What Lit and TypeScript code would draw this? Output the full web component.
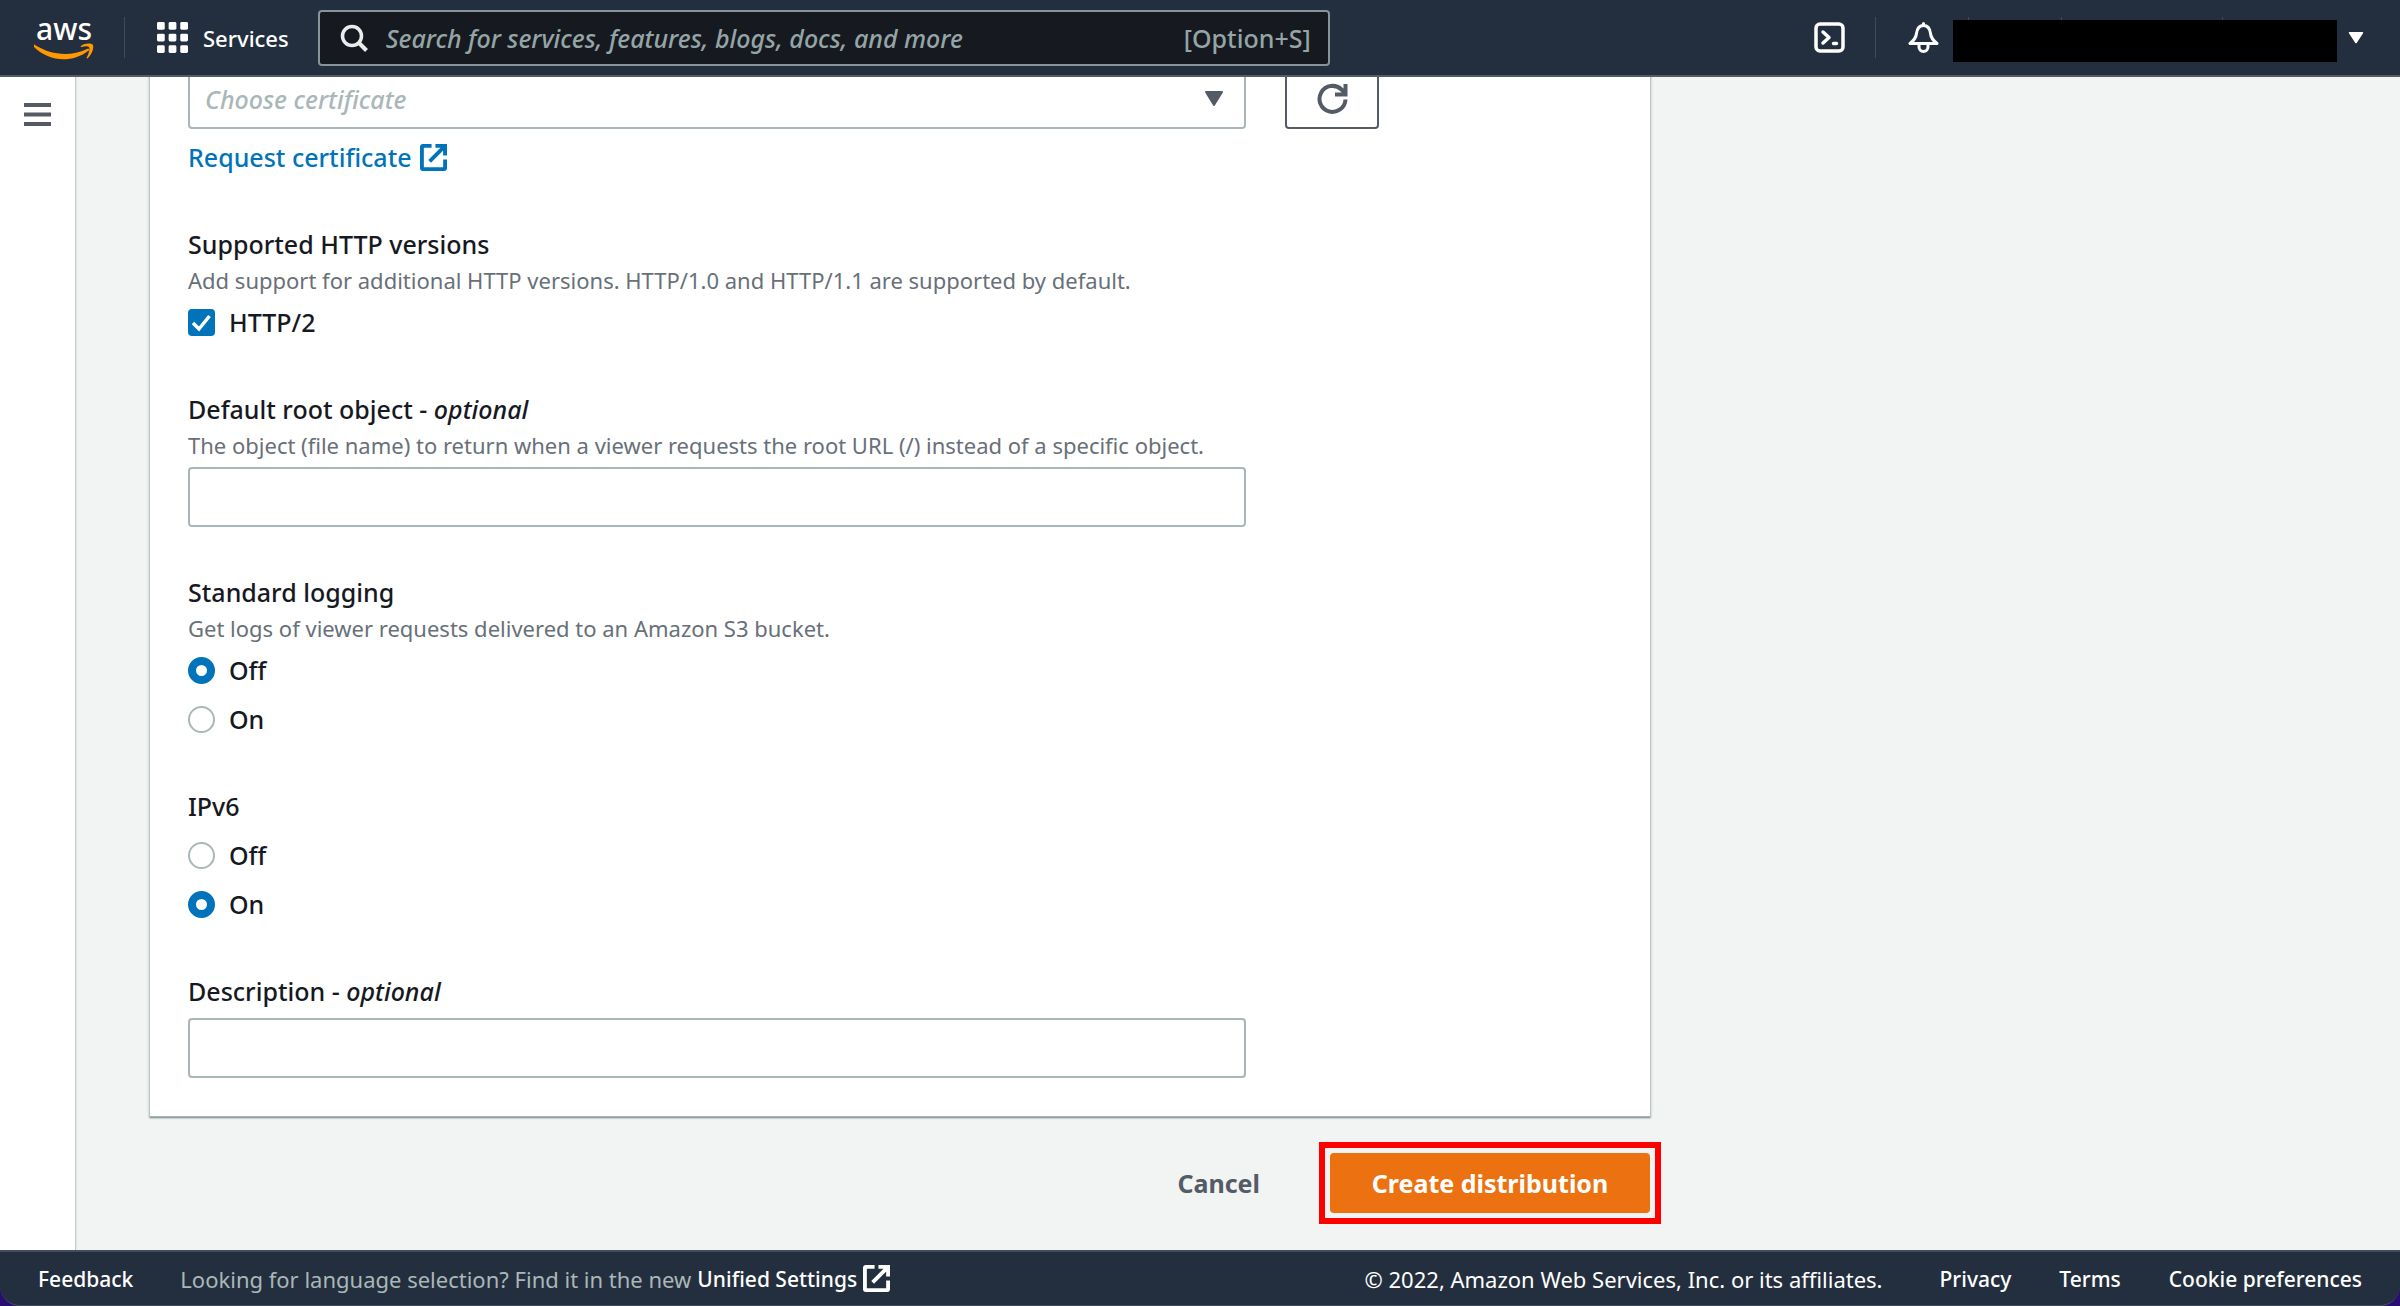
import { LitElement, html, css, svg } from "lit";
import { customElement } from "lit/decorators.js";

const externalIcon = html`<svg class="external" viewBox="0 0 28 28" aria-hidden="true">
  <path d="M12 2H3a1 1 0 0 0-1 1v22a1 1 0 0 0 1 1h22a1 1 0 0 0 1-1v-9M16 2h10v10M26 2 10 18" fill="none" stroke="currentColor" stroke-width="4" />
</svg>`;

const gridCells = [0, 12, 24].flatMap((y) => [0, 12, 24].map((x) => ({ x, y })));

@customElement("app-root")
export class AppRoot extends LitElement {
  static styles = css`
    :host {
      display: grid;
      grid-template-rows: auto 1fr auto;
      min-height: 100vh;
      background: #2a0d73;
      color: #16191f;
      font-family: "Noto Sans", "Open Sans", sans-serif;
      font-size: 25px;
      font-weight: 500;
      line-height: 36px;
    }
    * {
      box-sizing: border-box;
    }
    button, input, select {
      font: inherit;
      color: inherit;
      margin: 0;
    }
    button {
      background: none;
      border: 0;
      padding: 0;
      cursor: pointer;
    }
    a {
      text-decoration: none;
      color: inherit;
    }
    svg {
      display: block;
      flex: none;
    }

    .topbar {
      position: relative;
      z-index: 1;
      display: flex;
      align-items: center;
      height: 77px;
      padding: 0 36px 0 34px;
      background: #232f3e;
      border-bottom: 2px solid #545b64;
      color: #fff;
    }
    .logo {
      display: flex;
      flex-direction: column;
      align-items: center;
      width: 60px;
      font-size: 30px;
      line-height: 28px;
    }
    .smile {
      width: 60px;
      height: 18px;
    }
    .divider {
      width: 1px;
      height: 41px;
      background: #414b57;
    }
    .logo + .divider {
      margin: 0 32px 0 30px;
    }
    .services {
      display: flex;
      align-items: center;
      gap: 15px;
      margin-right: 29px;
      font-size: 22px;
    }
    .cells {
      width: 31px;
      height: 31px;
    }
    .search {
      display: flex;
      align-items: center;
      flex: 0 1 1012px;
      height: 56px;
      padding: 0 17px 0 20px;
      gap: 18px;
      background: #16191f;
      border: 2px solid #879596;
      border-radius: 4px;
      color: #95a5a6;
    }
    .search input {
      flex: 1;
      min-width: 0;
      padding: 0;
      background: none;
      border: 0;
      outline: 0;
    }
    .search input::placeholder {
      color: #95a5a6;
      font-style: italic;
      opacity: 1;
    }
    .lens {
      width: 28px;
      height: 28px;
      color: #eaeded;
    }
    .tools {
      display: flex;
      align-items: center;
      margin-left: auto;
    }
    .tools .icon {
      width: 31px;
      height: 31px;
    }
    .shell {
      margin-right: 30px;
    }
    .bell {
      margin: 0 14px 0 32px;
    }
    .account {
      display: flex;
      align-items: center;
      gap: 11px;
    }
    .mask {
      display: grid;
      width: 384px;
      height: 49px;
      padding-top: 4px;
      grid-template: 3px 42px / 16px 93px 161px 1fr;
    }
    .mask i {
      border-right: 1px solid #414b57;
    }
    .mask i:last-of-type {
      grid-column: 3;
    }
    .mask b {
      grid-column: 1 / -1;
      background: #000;
    }
    .caret {
      width: 16px;
      height: 12px;
    }

    .body {
      display: grid;
      grid-template-columns: 76px 1fr;
      overflow: hidden;
      background: #f2f3f3;
    }
    .rail {
      background: #fff;
      border-right: 1px solid #c5cccc;
      box-shadow: 1px 0 1px #e3e7e7;
      padding: 26px 24px;
    }
    .menu {
      display: block;
    }
    .menu svg {
      width: 27px;
      height: 23px;
      color: #545b64;
    }
    .content {
      max-width: 1574px;
      padding: 0 0 37px 74px;
      margin-top: -8px;
    }
    .card {
      display: flex;
      flex-direction: column;
      gap: 47px;
      padding: 0 38px 38px;
      background: #fff;
      box-shadow: 0 1px 2px 1px #aab7b8, 0 2px 1px #687078;
    }
    .field, fieldset {
      display: block;
      min-width: 0;
      margin: 0;
      padding: 0;
      border: 0;
    }
    .choices {
      padding-bottom: 4px;
    }
    .picker {
      display: flex;
      gap: 39px;
    }
    .select {
      position: relative;
      flex: 0 1 1058px;
    }
    .select .caret {
      position: absolute;
      right: 22px;
      top: 22px;
      width: 20px;
      height: 16px;
      color: #545b64;
      pointer-events: none;
    }
    .box {
      display: block;
      width: 100%;
      max-width: 1058px;
      height: 60px;
      padding: 0 15px;
      background: #fff;
      border: 2px solid #aab7b8;
      border-radius: 4px;
      appearance: none;
    }
    select.box {
      color: #aab7b8;
      font-style: italic;
    }
    .refresh {
      display: grid;
      place-items: center;
      width: 94px;
      height: 60px;
      border: 2px solid #545b64;
      border-radius: 4px;
      color: #545b64;
    }
    .refresh svg {
      width: 32px;
      height: 32px;
    }
    .request {
      display: flex;
      align-items: center;
      gap: 8px;
      width: fit-content;
      margin-top: 10px;
      color: #0073bb;
    }
    .external {
      width: 27px;
      height: 27px;
    }
    .title {
      display: block;
      padding: 0;
    }
    .hint {
      display: block;
      margin: 0;
      color: #687078;
      font-size: 22px;
      font-weight: 400;
    }
    .title + .box {
      margin-top: 9px;
    }
    .hint + .box {
      margin-top: 4px;
    }
    .options {
      display: grid;
      gap: 13px;
      justify-items: start;
      margin-top: 13px;
    }
    .hint + .options {
      margin-top: 6px;
    }
    .option {
      display: flex;
      align-items: center;
      gap: 14px;
    }
    .option input {
      display: grid;
      place-items: center;
      appearance: none;
      width: 27px;
      height: 27px;
      border: 2px solid #aab7b8;
      background: #fff;
    }
    .option input[type="radio"] {
      border-radius: 50%;
    }
    .option input[type="radio"]:checked {
      border: 8px solid #0073bb;
    }
    .tick {
      display: grid;
    }
    .tick input, .tick svg {
      grid-area: 1 / 1;
      width: 27px;
      height: 27px;
      pointer-events: none;
    }
    .tick input {
      border-radius: 4px;
    }
    .tick input:checked {
      background: #0073bb;
      border-color: #0073bb;
    }
    .actions {
      display: flex;
      justify-content: flex-end;
      align-items: center;
      gap: 70px;
      margin-top: 37px;
      font-weight: 700;
    }
    .cancel {
      color: #545b64;
    }
    .create {
      position: relative;
      width: 320px;
      height: 60px;
      background: #ec7211;
      border-radius: 4px;
      color: #fff;
    }
    .create::after {
      content: "";
      position: absolute;
      inset: -11px;
      border: 6px solid #f00;
      pointer-events: none;
    }

    .footer {
      display: flex;
      align-items: center;
      height: 56px;
      padding: 0 38px;
      background: #232f3e;
      border-top: 2px solid #414d5c;
      border-bottom: 1px solid #414d5c;
      border-radius: 0 0 20px 20px;
      color: #fff;
      font-size: 22px;
      font-weight: 400;
    }
    .footer a {
      font-size: 21px;
      font-weight: 500;
    }
    .language {
      display: flex;
      align-items: center;
      gap: 6px;
      margin: 0 auto 0 47px;
      color: #aab7b8;
    }
    .language a {
      display: flex;
      align-items: center;
      gap: 6px;
      color: #fff;
    }
    .legal {
      display: flex;
      gap: 48px;
    }
    .legal span {
      margin-right: 9px;
    }
  `;

  private caret = html`<svg class="caret" viewBox="0 0 20 16" preserveAspectRatio="none" aria-hidden="true">
    <path d="M2 1h16l-8 13z" fill="currentColor" stroke="currentColor" stroke-width="2" stroke-linejoin="round" />
  </svg>`;

  private radios(name: string, selected: string) {
    return html`<div class="options">
      ${["Off", "On"].map(
        (value) => html`<label class="option">
          <input type="radio" name=${name} value=${value} ?checked=${value === selected} />${value}
        </label>`
      )}
    </div>`;
  }

  render() {
    return html`
      <header class="topbar">
        <a class="logo" href="#">aws
          <svg class="smile" viewBox="0 0 60 18" aria-hidden="true">
            <path d="M1 2C17 12 36 14 53 6c2-1 3 1 1 2C37 21 14 18 0 4-1 2 0 1 1 2z" fill="#f90" />
            <path d="M47 3c4-3 10-3 12-1 1 3-1 9-5 13-1 1-2 0-1-1 2-4 3-8 2-10-1-1-5-1-7 0-1 0-2 0-1-1z" fill="#f90" />
          </svg>
        </a>
        <span class="divider"></span>
        <button class="services">
          <svg class="cells" viewBox="0 0 32 32" aria-hidden="true">
            ${gridCells.map((c) => svg`<rect x=${c.x} y=${c.y} width="8" height="8" rx="1.5" fill="currentColor" />`)}
          </svg>
          Services
        </button>
        <label class="search">
          <svg class="lens" viewBox="0 0 28 28" aria-hidden="true">
            <circle cx="12" cy="12" r="9.5" fill="none" stroke="currentColor" stroke-width="3.5" />
            <path d="m18.5 18.5 8 8" stroke="currentColor" stroke-width="4" />
          </svg>
          <input type="search" aria-label="Search" placeholder="Search for services, features, blogs, docs, and more" />
          <span>[Option+S]</span>
        </label>
        <div class="tools">
          <button class="shell" aria-label="CloudShell">
            <svg class="icon" viewBox="0 0 31 31" fill="none" stroke="currentColor" stroke-width="3.5" stroke-linecap="round" stroke-linejoin="round">
              <rect x="2" y="2" width="27" height="27" rx="4" />
              <path d="m9 10 6 5.5L9 21M19.500 21.500h3" />
            </svg>
          </button>
          <span class="divider"></span>
          <button class="bell" aria-label="Notifications">
            <svg class="icon" viewBox="0 0 31 31" fill="none" stroke="currentColor" stroke-width="3" stroke-linejoin="round" stroke-linecap="round">
              <path d="M15.500 1.500v2M15.500 3.500c-4.500 0-6.500 4-7 8-.5 5-3 7-6.500 10h27c-3.500-3-6-5-6.500-10-.5-4-2.500-8-7-8zM11 22v3a4.500 4.500 0 0 0 9 0v-3" />
            </svg>
          </button>
          <button class="account" aria-label="Account">
            <span class="mask"><i></i><i></i><i></i><b></b></span>
            ${this.caret}
          </button>
        </div>
      </header>

      <div class="body">
        <nav class="rail">
          <button class="menu" aria-label="Open navigation">
            <svg viewBox="0 0 27 23" aria-hidden="true"><path d="M0 2h27M0 11.500h27M0 21h27" stroke="currentColor" stroke-width="4" /></svg>
          </button>
        </nav>
        <main class="content">
          <form class="card" @submit=${(e: Event) => e.preventDefault()}>
            <div class="field choices">
              <div class="picker">
                <div class="select">
                  <select class="box" aria-label="Certificate"><option>Choose certificate</option></select>
                  ${this.caret}
                </div>
                <button type="button" class="refresh" aria-label="Refresh certificates">
                  <svg viewBox="0 0 32 32" fill="none" stroke="currentColor" stroke-width="4" aria-hidden="true">
                    <path d="M29.500 16.500a13 13 0 1 1-4-10L29 10M29.500 1v10.500H19" />
                  </svg>
                </button>
              </div>
              <a class="request" href="#">Request certificate ${externalIcon}</a>
            </div>

            <fieldset class="choices">
              <legend class="title">Supported HTTP versions</legend>
              <p class="hint">Add support for additional HTTP versions. HTTP/1.0 and HTTP/1.1 are supported by default.</p>
              <div class="options">
                <label class="option">
                  <span class="tick">
                    <input type="checkbox" checked />
                    <svg viewBox="0 0 27 27" aria-hidden="true"><path d="m5 14 6 6L21.500 7" fill="none" stroke="#fff" stroke-width="3.5" /></svg>
                  </span>
                  HTTP/2
                </label>
              </div>
            </fieldset>

            <div class="field">
              <label class="title" for="root-object">Default root object - <em>optional</em></label>
              <p class="hint">The object (file name) to return when a viewer requests the root URL (/) instead of a specific object.</p>
              <input class="box" id="root-object" type="text" />
            </div>

            <fieldset class="choices">
              <legend class="title">Standard logging</legend>
              <p class="hint">Get logs of viewer requests delivered to an Amazon S3 bucket.</p>
              ${this.radios("logging", "Off")}
            </fieldset>

            <fieldset class="choices">
              <legend class="title">IPv6</legend>
              ${this.radios("ipv6", "On")}
            </fieldset>

            <div class="field">
              <label class="title" for="description">Description - <em>optional</em></label>
              <input class="box" id="description" type="text" />
            </div>
          </form>
          <div class="actions">
            <button class="cancel">Cancel</button>
            <button class="create">Create distribution</button>
          </div>
        </main>
      </div>

      <footer class="footer">
        <a href="#">Feedback</a>
        <p class="language">Looking for language selection? Find it in the new <a href="#">Unified Settings ${externalIcon}</a></p>
        <div class="legal">
          <span>© 2022, Amazon Web Services, Inc. or its affiliates.</span>
          <a href="#">Privacy</a>
          <a href="#">Terms</a>
          <a href="#">Cookie preferences</a>
        </div>
      </footer>
    `;
  }
}
